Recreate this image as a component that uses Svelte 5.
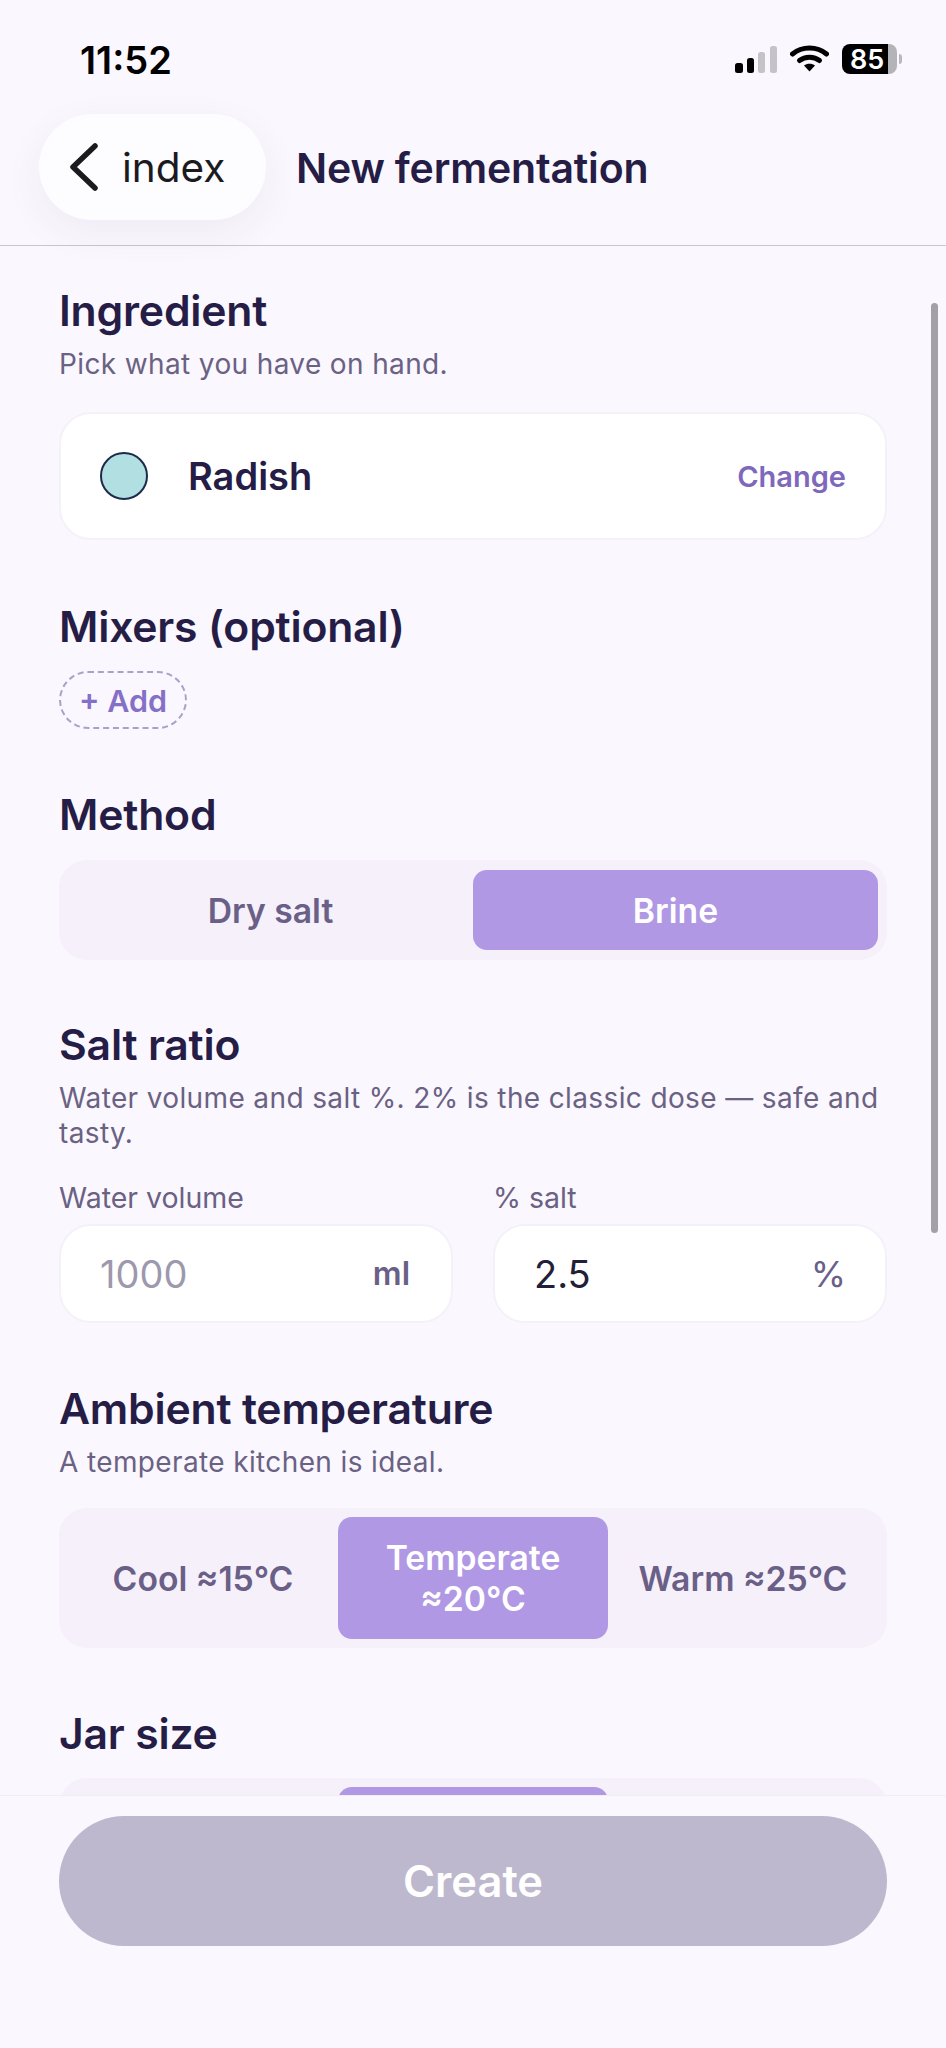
<script lang="ts">
  const ambient = [
    { label: "Cool ≈15°C", active: false },
    { label: "Temperate ≈20°C", active: true },
    { label: "Warm ≈25°C", active: false }
  ];
</script>

<div class="screen">
  <div class="status">
    <span class="time">11:52</span>
    <div class="status-icons">
      <svg width="42" height="27" viewBox="0 0 42 27">
        <rect x="0" y="17" width="8" height="10" rx="2.5" fill="#000" />
        <rect x="12" y="12" width="7" height="15" rx="2.5" fill="#000" />
        <rect x="23" y="6" width="7" height="21" rx="2.5" fill="#c4c4c8" />
        <rect x="35" y="0" width="7" height="27" rx="2.5" fill="#c4c4c8" />
      </svg>
      <svg class="wifi" width="39" height="27" viewBox="0 0 39 27">
        <path d="M2.5 9C12 1 27 1 36.5 9" fill="none" stroke="#000" stroke-width="5" stroke-linecap="round" />
        <path d="M9.5 15.5C15 11 24 11 29.5 15.5" fill="none" stroke="#000" stroke-width="5" stroke-linecap="round" />
        <path d="M14 20.5C17 18 22 18 25 20.5L19.5 26.5Z" fill="#000" />
      </svg>
      <div class="battery">
        <div class="battery-body"><span>85</span></div>
        <div class="battery-rest"></div>
        <div class="battery-cap"></div>
      </div>
    </div>
  </div>

  <header class="topbar">
    <div class="back">
      <svg width="32" height="48" viewBox="0 0 32 48">
        <path d="M27 3L5 24L27 45" fill="none" stroke="#1b1b1f" stroke-width="5.5" stroke-linecap="round" stroke-linejoin="round" />
      </svg>
      <span>index</span>
    </div>
    <h1>New fermentation</h1>
  </header>

  <main class="scroll">
    <section class="first">
      <h2>Ingredient</h2>
      <p class="sub">Pick what you have on hand.</p>
      <div class="card">
        <span class="dot"></span>
        <span class="name">Radish</span>
        <span class="change">Change</span>
      </div>
    </section>

    <section class="mixers">
      <h2>Mixers (optional)</h2>
      <div class="add">+ Add</div>
    </section>

    <section class="method">
      <h2>Method</h2>
      <div class="seg two">
        <div class="opt">Dry salt</div>
        <div class="opt active">Brine</div>
      </div>
    </section>

    <section class="salt">
      <h2>Salt ratio</h2>
      <p class="sub">Water volume and salt %. 2% is the classic dose — safe and tasty.</p>
      <div class="fields">
        <div class="field">
          <span class="label">Water volume</span>
          <div class="input">
            <span class="placeholder">1000</span>
            <span class="unit strong">ml</span>
          </div>
        </div>
        <div class="field">
          <span class="label">% salt</span>
          <div class="input">
            <span class="value">2.5</span>
            <span class="unit">%</span>
          </div>
        </div>
      </div>
    </section>

    <section class="ambient">
      <h2>Ambient temperature</h2>
      <p class="sub">A temperate kitchen is ideal.</p>
      <div class="seg three">
        {#each ambient as item}
          <div class="opt" class:active={item.active}>{item.label}</div>
        {/each}
      </div>
    </section>

    <section class="jar">
      <h2>Jar size</h2>
      <div class="seg three">
        <div class="opt"></div>
        <div class="opt active jar-opt"></div>
        <div class="opt"></div>
      </div>
    </section>

    <div class="scrollbar"></div>
  </main>

  <footer class="footer">
    <div class="create">Create</div>
  </footer>
</div>

<style>
  :global(body) {
    margin: 0;
    background: #faf7fe;
  }
  .screen {
    width: 946px;
    height: 2048px;
    display: flex;
    flex-direction: column;
    background: #faf7fe;
    font-family: Inter, "Liberation Sans", sans-serif;
    color: #251d45;
    overflow: hidden;
  }

  .status {
    height: 114px;
    box-sizing: border-box;
    padding: 38px 44px 0 80px;
    display: flex;
    justify-content: space-between;
    align-items: flex-start;
    flex-shrink: 0;
  }
  .time {
    font-size: 38px;
    line-height: 44px;
    font-weight: 600;
    color: #000;
  }
  .status-icons {
    display: flex;
    align-items: center;
    gap: 13px;
    height: 44px;
    margin-top: -1px;
  }
  .wifi {
    margin-top: -1px;
  }
  .battery {
    display: flex;
    align-items: center;
  }
  .battery-body {
    width: 46px;
    height: 30px;
    box-sizing: border-box;
    padding-left: 8px;
    background: #000;
    border-radius: 8px 0 0 8px;
    color: #fff;
    font-size: 27px;
    font-weight: 600;
    display: flex;
    align-items: center;
    white-space: nowrap;
  }
  .battery-rest {
    width: 9px;
    height: 30px;
    background: #b4b4b8;
    border-radius: 0 8px 8px 0;
  }
  .battery-cap {
    width: 3px;
    height: 10px;
    margin-left: 2px;
    background: #b9b9bd;
    border-radius: 0 3px 3px 0;
  }

  .topbar {
    height: 132px;
    box-sizing: border-box;
    padding: 0 0 25px 39px;
    display: flex;
    align-items: center;
    gap: 30px;
    border-bottom: 1.5px solid #c9c6d0;
    flex-shrink: 0;
  }
  .back {
    width: 227px;
    height: 106px;
    box-sizing: border-box;
    padding-left: 29px;
    border-radius: 53px;
    background: #fdfcff;
    box-shadow: 0 12px 40px rgba(60, 50, 90, 0.06);
    display: flex;
    align-items: center;
    gap: 22px;
    color: #1b1b1f;
    font-size: 40.5px;
  }
  .back span {
    margin-top: 1px;
  }
  h1 {
    margin: 1px 0 0;
    font-size: 41px;
    font-weight: 600;
    letter-spacing: -0.17px;
  }

  .scroll {
    position: relative;
    flex: 1;
    min-height: 0;
    overflow: hidden;
    padding: 0 59px;
  }
  section {
    display: flex;
    flex-direction: column;
  }
  h2 {
    margin: 0;
    font-size: 42.7px;
    line-height: 48px;
    font-weight: 600;
    letter-spacing: -0.2px;
  }
  .sub {
    margin: 12px 0 0;
    font-size: 28px;
    line-height: 35px;
    color: #6a6183;
    letter-spacing: 0.37px;
  }
  .first {
    padding-top: 41px;
  }
  .card {
    margin-top: 30px;
    height: 128px;
    box-sizing: border-box;
    padding: 0 39px;
    display: flex;
    align-items: center;
    background: #fff;
    border: 2px solid #f5f1f9;
    border-radius: 32px;
  }
  .dot {
    width: 48px;
    height: 48px;
    box-sizing: border-box;
    border-radius: 50%;
    background: #b2e0e2;
    border: 2.5px solid #1d2a4a;
  }
  .name {
    margin-left: 40px;
    font-size: 38px;
    font-weight: 600;
  }
  .change {
    margin-left: auto;
    font-size: 29px;
    font-weight: 600;
    color: #7e68bb;
  }

  .mixers {
    margin-top: 63px;
  }
  .add {
    margin-top: 20px;
    width: 128px;
    height: 58px;
    box-sizing: border-box;
    border: 2px dashed #ad9fc9;
    border-radius: 29px;
    display: flex;
    align-items: center;
    justify-content: center;
    font-size: 30.5px;
    font-weight: 600;
    color: #8570c7;
  }

  .method {
    margin-top: 62px;
  }
  .seg {
    margin-top: 21px;
    box-sizing: border-box;
    display: grid;
    padding: 9px;
    background: #f5f0f9;
    border-radius: 28px;
  }
  .seg.two {
    grid-template-columns: 1fr 1fr;
    height: 100px;
    padding: 10px 9px;
  }
  .seg.three {
    grid-template-columns: 1fr 1fr 1fr;
  }
  .opt {
    display: flex;
    align-items: center;
    justify-content: center;
    text-align: center;
    font-size: 33.7px;
    line-height: 41px;
    font-weight: 600;
    color: #6a5f87;
    border-radius: 14px;
  }
  .opt.active {
    background: #b098e4;
    color: #fff;
  }

  .salt {
    margin-top: 61px;
  }
  .fields {
    margin-top: 31px;
    display: grid;
    grid-template-columns: 1fr 1fr;
    gap: 40px;
  }
  .field {
    display: flex;
    flex-direction: column;
    gap: 10px;
  }
  .label {
    font-size: 28.5px;
    line-height: 32px;
    color: #6a6183;
  }
  .input {
    height: 99px;
    box-sizing: border-box;
    padding: 0 39px;
    display: flex;
    align-items: center;
    justify-content: space-between;
    background: #fff;
    border: 2px solid #f5f1f9;
    border-radius: 32px;
    font-size: 38px;
  }
  .placeholder {
    color: #9d99ad;
  }
  .value {
    color: #222038;
  }
  .unit {
    font-size: 36px;
    color: #6a5f87;
  }
  .unit.strong {
    font-size: 32px;
    font-weight: 600;
    margin-right: 2px;
  }

  .ambient {
    margin-top: 62px;
  }
  .ambient .seg {
    margin-top: 28px;
    height: 140px;
  }
  .jar {
    margin-top: 62px;
  }
  .jar .seg {
    height: 140px;
    margin-top: 20px;
  }
  .jar-opt {
    height: 122px;
  }

  .scrollbar {
    position: absolute;
    top: 57px;
    right: 8px;
    width: 7px;
    height: 930px;
    background: #a2a1a6;
    border-radius: 4px;
  }

  .footer {
    position: relative;
    height: 253px;
    box-sizing: border-box;
    padding: 20px 59px 0;
    background: #faf7fe;
    border-top: 1.5px solid #f1eef5;
    flex-shrink: 0;
  }
  .create {
    height: 130px;
    border-radius: 65px;
    background: #bdb8cd;
    color: #fff;
    display: flex;
    align-items: center;
    justify-content: center;
    font-size: 43.5px;
    font-weight: 600;
  }
</style>
